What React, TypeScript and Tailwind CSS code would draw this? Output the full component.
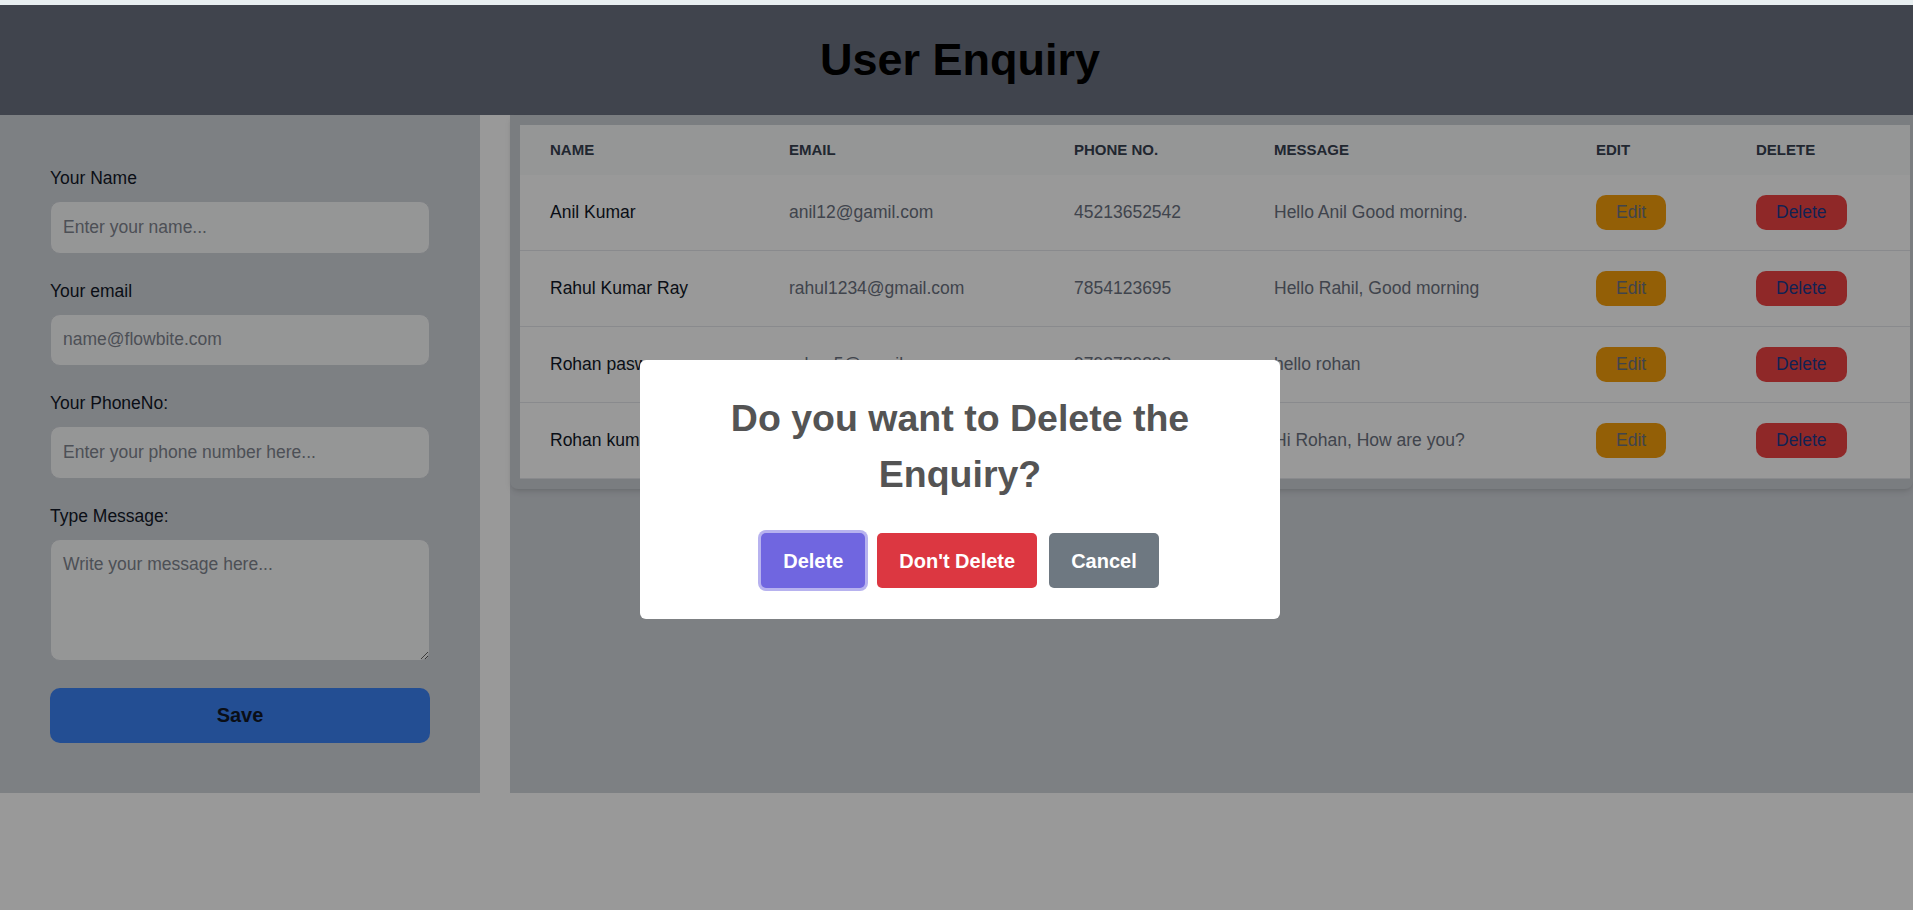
import React from 'react'

const rows = [
  { name: 'Anil Kumar', email: 'anil12@gamil.com', phone: '45213652542', message: 'Hello Anil Good morning.' },
  { name: 'Rahul Kumar Ray', email: 'rahul1234@gmail.com', phone: '7854123695', message: 'Hello Rahil, Good morning' },
  { name: 'Rohan paswan', email: 'rohan5@gmail.com', phone: '9798789898', message: 'hello rohan' },
  { name: 'Rohan kumar', email: 'rohan12@gmail.com', phone: '9876543210', message: 'Hi Rohan, How are you?' },
]

const inputCls =
  'block w-full h-[52.5px] rounded-[10px] border border-[#d1d5db] bg-[#f9fafb] px-[12px] text-[17.5px] text-[#111827] placeholder:text-[#80858f] outline-none'

function Field({ label, placeholder, type = 'text' }: { label: string; placeholder: string; type?: string }) {
  return (
    <div className="mb-[25px]">
      <label className="mb-[10px] block text-[17.5px] leading-[25px] font-medium text-[#111827]">{label}</label>
      <input type={type} placeholder={placeholder} className={inputCls} />
    </div>
  )
}

export default function App() {
  return (
    <div className="min-h-screen bg-white font-['Liberation_Sans',Arial,sans-serif]">
      <div className="h-[5px] bg-[#e8eff1]" />
      <header className="bg-[#6b7280] py-[30px] pl-[7px] text-center">
        <h1 className="text-[45px] leading-[50px] font-bold text-black">User Enquiry</h1>
      </header>

      <div className="flex gap-[30px]">
        <aside className="w-[480px] shrink-0 bg-[#d1d5db] px-[50px] pt-[51px] pb-[50px]">
          <Field label="Your Name" placeholder="Enter your name..." />
          <Field label="Your email" placeholder="name@flowbite.com" type="email" />
          <Field label="Your PhoneNo:" placeholder="Enter your phone number here..." />
          <div className="mb-[27px]">
            <label className="mb-[10px] block text-[17.5px] leading-[25px] font-medium text-[#111827]">Type Message:</label>
            <textarea
              placeholder="Write your message here..."
              className="block h-[122px] w-full rounded-[10px] border border-[#d1d5db] bg-[#f9fafb] p-[12px] text-[17.5px] leading-[25px] text-[#111827] placeholder:text-[#80858f] outline-none"
            />
          </div>
          <button className="h-[55px] w-full rounded-[10px] bg-[#3b82f6] text-[20px] font-bold text-[#111827]">Save</button>
        </aside>

        <section className="flex-1 bg-[#d1d5db]">
          <div className="rounded-b-lg bg-[#cbd0d6] pt-[10px] pb-[10px] pl-[10px] pr-[3px] shadow-md">
            <table className="w-full table-fixed text-left text-[17.5px] leading-[25px] text-[#6b7280]">
              <thead className="bg-[#f9fafb] text-[15px] leading-[20px] uppercase text-[#374151]">
                <tr>
                  <th className="w-[239px] px-[30px] py-[15px] font-bold">Name</th>
                  <th className="w-[285px] px-[30px] py-[15px] font-bold">Email</th>
                  <th className="w-[200px] px-[30px] py-[15px] font-bold">Phone No.</th>
                  <th className="w-[322px] px-[30px] py-[15px] font-bold">Message</th>
                  <th className="w-[160px] px-[30px] py-[15px] font-bold">Edit</th>
                  <th className="px-[30px] py-[15px] font-bold">Delete</th>
                </tr>
              </thead>
              <tbody>
                {rows.map(r => (
                  <tr key={r.name} className="border-b border-[#e5e7eb] bg-white">
                    <td className="px-[30px] py-[20px] whitespace-nowrap font-medium text-[#111827]">{r.name}</td>
                    <td className="px-[30px] py-[20px]">{r.email}</td>
                    <td className="px-[30px] py-[20px]">{r.phone}</td>
                    <td className="px-[30px] py-[20px]">{r.message}</td>
                    <td className="px-[30px] py-[20px]">
                      <button className="rounded-[10px] bg-[#f59e0b] px-[20px] py-[5px]">Edit</button>
                    </td>
                    <td className="px-[30px] py-[20px]">
                      <button className="rounded-[10px] bg-[#ef4444] px-[20px] py-[5px] text-[#1e3a8a]">Delete</button>
                    </td>
                  </tr>
                ))}
              </tbody>
            </table>
          </div>
        </section>
      </div>

      {/* confirm dialog over the page */}
      <div className="fixed inset-x-0 top-[5px] bottom-0 flex justify-center bg-black/40 pt-[355px] pl-[7px]">
        <div className="h-fit w-[640px] rounded-[6px] bg-white pb-[25px] text-center">
          <h2 className="px-[37px] pt-[30px] text-[37.5px] leading-[56px] font-semibold text-[#545454]">
            Do you want to Delete the Enquiry?
          </h2>
          <div className="mt-[25px] flex justify-center">
            <button className="m-[6px] rounded-[5px] bg-[#7066e0] px-[22px] py-[12.5px] text-[20px] leading-[30px] font-semibold text-white shadow-[0_0_0_3px_rgba(112,102,224,0.5)]">
              Delete
            </button>
            <button className="m-[6px] rounded-[5px] bg-[#dc3741] px-[22px] py-[12.5px] text-[20px] leading-[30px] font-semibold text-white">
              Don't Delete
            </button>
            <button className="m-[6px] rounded-[5px] bg-[#6e7881] px-[22px] py-[12.5px] text-[20px] leading-[30px] font-semibold text-white">
              Cancel
            </button>
          </div>
        </div>
      </div>
    </div>
  )
}
